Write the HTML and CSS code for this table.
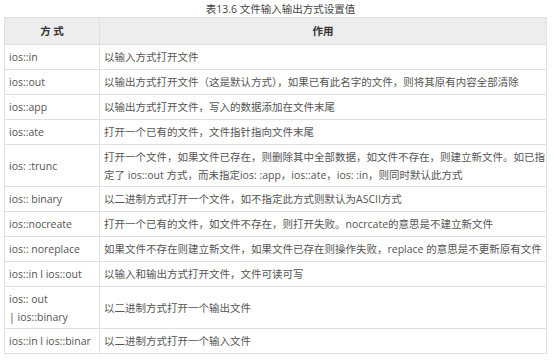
FILE: index.html
```html
<!DOCTYPE html>
<html lang="zh-CN">
<head>
<meta charset="utf-8">
<title>表13.6 文件输入输出方式设置值</title>
<link rel="stylesheet" href="styles.css">
</head>
<body>
<div class="wrap">
  <div class="caption">表13.6 文件输入输出方式设置值</div>
  <table class="modes">
    <thead>
      <tr><th class="c1">方 式</th><th class="c2">作用</th></tr>
    </thead>
    <tbody>
      <tr><td>ios::in</td><td>以输入方式打开文件</td></tr>
      <tr><td>ios::out</td><td>以输出方式打开文件（这是默认方式），如果已有此名字的文件，则将其原有内容全部清除</td></tr>
      <tr><td>ios::app</td><td>以输出方式打开文件，写入的数据添加在文件末尾</td></tr>
      <tr><td>ios::ate</td><td>打开一个已有的文件，文件指针指向文件末尾</td></tr>
      <tr class="tall"><td>ios: :trunc</td><td class="nowrap">打开一个文件，如果文件已存在，则删除其中全部数据，如文件不存在，则建立新文件。如已指<br>定了 ios::out 方式，而未指定ios: :app，ios::ate，ios: :in，则同时默认此方式</td></tr>
      <tr><td>ios:: binary</td><td>以二进制方式打开一个文件，如不指定此方式则默认为ASCII方式</td></tr>
      <tr><td>ios::nocreate</td><td>打开一个已有的文件，如文件不存在，则打开失败。nocrcate的意思是不建立新文件</td></tr>
      <tr><td>ios:: noreplace</td><td class="nowrap">如果文件不存在则建立新文件，如果文件已存在则操作失败，replace 的意思是不更新原有文件</td></tr>
      <tr><td>ios::in l ios::out</td><td>以输入和输出方式打开文件，文件可读可写</td></tr>
      <tr class="tall"><td>ios:: out<br>| ios::binary</td><td>以二进制方式打开一个输出文件</td></tr>
      <tr><td>ios::in l ios::binar</td><td>以二进制方式打开一个输入文件</td></tr>
    </tbody>
  </table>
</div>
</body>
</html>
```
FILE: styles.css
```css
html, body {
  margin: 0;
  padding: 0;
  background: #ffffff;
}
body {
  font-family: "Open Sans", "Noto Sans CJK SC", sans-serif;
  color: #555555;
}
.wrap {
  padding: 3px 0 0 4px;
  width: 543px;
}
.caption {
  text-align: center;
  font-size: 10.5px;
  line-height: 13px;
  height: 14px;
  color: #444444;
  padding-left: 10px;
}
.modes {
  border-collapse: collapse;
  width: 543px;
  table-layout: fixed;
  font-size: 10.5px;
  border: 1px solid #d9d9d9;
}
.modes th, .modes td {
  border: 1px solid #e0e0e0;
  padding: 0 4px;
  text-align: left;
  vertical-align: middle;
  font-weight: normal;
  line-height: 18px;
}
.modes th {
  background: #ededed;
  color: #333333;
  font-weight: bold;
  text-align: center;
  height: 26px;
}
.modes th.c1 { width: 86px; }
.modes td { height: 24px; }
.modes tr.tall td { height: 41px; }
.modes td.nowrap { white-space: nowrap; overflow: hidden; }
```
